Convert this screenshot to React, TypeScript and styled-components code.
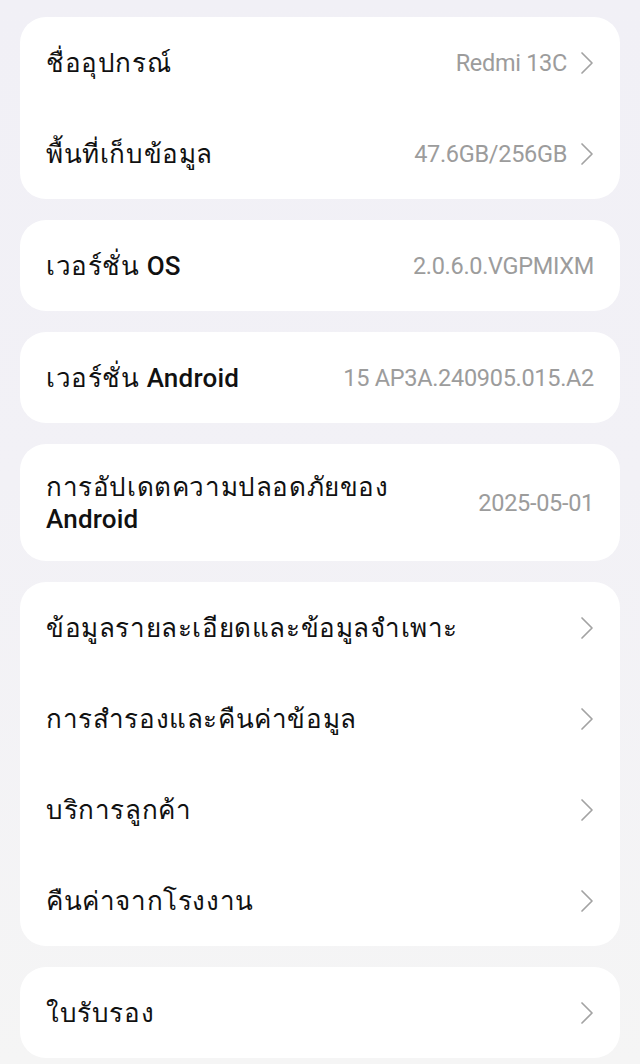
import styled, { createGlobalStyle } from 'styled-components';

const GlobalStyle = createGlobalStyle`
  html, body {
    margin: 0;
    padding: 0;
  }
  body {
    background: linear-gradient(180deg, #f1f0f6 0%, #f2f1f6 45%, #f5f5f5 100%);
    font-family: Roboto, "Noto Sans", sans-serif;
    -webkit-font-smoothing: antialiased;
  }
`;

const Page = styled.div`
  width: 640px;
  min-height: 1064px;
  box-sizing: border-box;
  padding: 17px 20px 0;
  display: flex;
  flex-direction: column;
  gap: 21px;
`;

const Card = styled.div`
  background: #ffffff;
  border-radius: 26px;
  display: flex;
  flex-direction: column;
  padding: 0 26px;
`;

const Row = styled.div<{ $tall?: boolean }>`
  height: ${(p) => (p.$tall ? '117px' : '91px')};
  display: flex;
  align-items: center;
  justify-content: space-between;
  gap: 20px;
`;

const Title = styled.div`
  font-size: 26px;
  line-height: 32px;
  color: #111111;
  letter-spacing: 0.6px;
`;

const Strong = styled.span`
  font-weight: 500;
  letter-spacing: 0.2px;
`;

const Right = styled.div`
  display: flex;
  align-items: center;
  gap: 13px;
  flex-shrink: 0;
`;

const Value = styled.span`
  font-size: 23.5px;
  color: #9c9c9c;
  letter-spacing: -0.3px;
`;

const Chevron = () => (
  <svg width="14" height="24" viewBox="0 0 14 24" fill="none">
    <path d="M2 2 L12 12 L2 22" stroke="#a3a3a3" strokeWidth="1.7" strokeLinecap="round" strokeLinejoin="round" />
  </svg>
);

type Item = { title: React.ReactNode; value?: string; arrow?: boolean; tall?: boolean };

const cards: Item[][] = [
  [
    { title: 'ชื่ออุปกรณ์', value: 'Redmi 13C', arrow: true },
    { title: 'พื้นที่เก็บข้อมูล', value: '47.6GB/256GB', arrow: true },
  ],
  [{ title: <>เวอร์ชั่น <Strong>OS</Strong></>, value: '2.0.6.0.VGPMIXM' }],
  [{ title: <>เวอร์ชั่น <Strong>Android</Strong></>, value: '15 AP3A.240905.015.A2' }],
  [
    {
      title: <>การอัปเดตความปลอดภัยของ<br /><Strong>Android</Strong></>,
      value: '2025-05-01',
      tall: true,
    },
  ],
  [
    { title: 'ข้อมูลรายละเอียดและข้อมูลจำเพาะ', arrow: true },
    { title: 'การสำรองและคืนค่าข้อมูล', arrow: true },
    { title: 'บริการลูกค้า', arrow: true },
    { title: 'คืนค่าจากโรงงาน', arrow: true },
  ],
  [{ title: 'ใบรับรอง', arrow: true }],
];

const App = () => {
  return (
    <>
      <GlobalStyle />
      <Page>
        {cards.map((items, i) => (
          <Card key={i}>
            {items.map((it, j) => (
              <Row key={j} $tall={it.tall}>
                <Title>{it.title}</Title>
                <Right>
                  {it.value && <Value>{it.value}</Value>}
                  {it.arrow && <Chevron />}
                </Right>
              </Row>
            ))}
          </Card>
        ))}
      </Page>
    </>
  );
};

export default App;
